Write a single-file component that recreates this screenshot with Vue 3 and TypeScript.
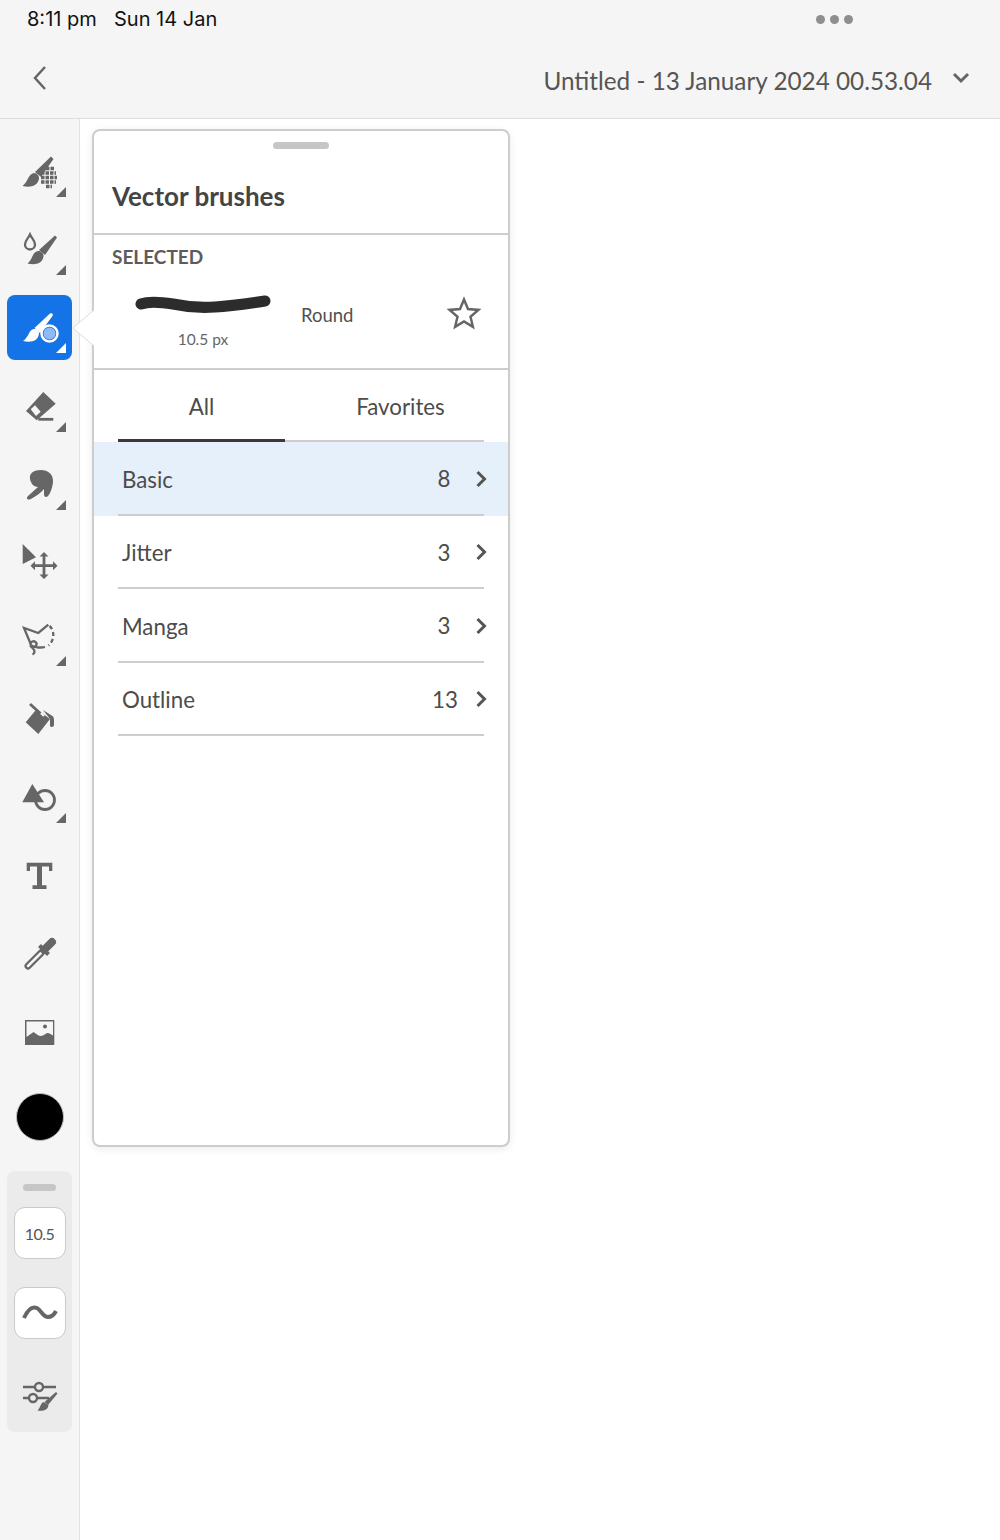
<script setup lang="ts">
interface BrushGroup {
  name: string
  count: number
  active?: boolean
}

const groups: BrushGroup[] = [
  { name: 'Basic', count: 8, active: true },
  { name: 'Jitter', count: 3 },
  { name: 'Manga', count: 3 },
  { name: 'Outline', count: 13 }
]
</script>

<template>
  <div class="app">
    <header class="top">
      <div class="status">
        <span class="clock">8:11 pm</span>
        <span class="date">Sun 14 Jan</span>
        <span class="dots"><i></i><i></i><i></i></span>
      </div>
      <div class="nav">
        <svg class="back" width="16" height="26" viewBox="0 0 16 26"><path d="M13 2 3 13l10 11" /></svg>
        <span class="doc-title">Untitled - 13 January 2024 00.53.04</span>
        <svg class="doc-chev" width="18" height="14" viewBox="0 0 18 14"><path d="M2 3l7 7 7-7" /></svg>
      </div>
    </header>

    <div class="body">
      <aside class="rail">
        <!-- pixel brush -->
        <div class="tool">
          <svg viewBox="0 0 60 60">
            <path d="M41 14.5l2.5 2.5L31 35l-6-5z" />
            <path d="M24 31c-6 1-6 9-11.5 13 7 1.5 14.5 1 16.5-7 .5-3-2-6-5-6z" />
            <g class="grid">
              <path d="M36 26.5h8" />
              <path d="M31 31h15" />
              <path d="M31 35.5h16" />
              <path d="M31 40h15" />
              <path d="M36 44.5h6" />
            </g>
            <path d="M46 55l10-10v10z" />
          </svg>
        </div>
        <!-- drop brush -->
        <div class="tool">
          <svg viewBox="0 0 60 60">
            <path class="line" d="M20 14.5c-1.5 3.5-5 6-5 10a5 5 0 0 0 10 0c0-4-3.5-6.5-5-10z" />
            <path d="M45 15.5l2 2L35 35l-6-5z" />
            <path d="M28 31c-6 1-5 8-10.5 12.5 7 1.5 14.5 1 16-7 .5-3-2.5-6-5.5-5.5z" />
            <path d="M46 55l10-10v10z" />
          </svg>
        </div>
        <!-- vector brush, selected -->
        <div class="tool on">
          <span class="tool-bg"></span>
          <svg viewBox="0 0 60 60">
            <path d="M40 15.5c2-1 3.5.5 2.5 2.5L30 35l-5.5-5z" />
            <path d="M23.5 31c-5 1-4.500 8-10.500 12 7 1.500 15 1 16-7.500 .5-2.500-2.500-5-5.500-4.500z" />
            <circle cx="39.5" cy="35.5" r="8" class="ring" />
            <circle cx="39.5" cy="35.5" r="6" class="dot" />
            <path d="M46 55l10-10v10z" />
          </svg>
        </div>
        <!-- eraser -->
        <div class="tool">
          <svg viewBox="0 0 60 60">
            <path fill-rule="evenodd" d="M33.3 15l12.4 11.7L26.7 43.3 16 34zM20.7 32.3 26 39l4.7-4.3L25 28.3z" />
            <path class="line thick" d="M28.3 42.3h15" />
            <path d="M46 55l10-10v10z" />
          </svg>
        </div>
        <!-- smudge -->
        <div class="tool">
          <svg viewBox="0 0 60 60">
            <path d="M20 24c-1-6 4-9 11-9 7 0 12 4 12 11 0 6-3 13-5 15-2 2-4 1-4-2v-5c-3 4-8 7-14 10.5-3 .5-4-1.5-2-3.5l10-9c-4 0-7-3-8-8z" />
            <path d="M46 55l10-10v10z" />
          </svg>
        </div>
        <!-- select / move -->
        <div class="tool">
          <svg viewBox="0 0 60 60">
            <path d="M12.7 11l13.3 13.3L12.7 31z" />
            <path class="line thick" d="M34 22v21M23 32.7h22" />
            <path d="M34 19l4.5 4.5h-9zM34 46l4.5-4.5h-9zM20.5 32.7l4.5-4.5v9zM47.5 32.7l-4.5-4.5v9z" />
          </svg>
        </div>
        <!-- lasso -->
        <div class="tool">
          <svg viewBox="0 0 60 60">
            <path class="line" d="M38.3 13.7 28.3 22 14 17l6.7 16" />
            <path class="line" stroke-dasharray="4 3" d="M39.5 15c5 4 5.5 14-1 19.5" />
            <path class="line" d="M35 36c-4 1-12 .5-14-2-2-3 3-5 5-2.5s-1.5 5-4 4c-2-1-2-1 1 2 2 2 2 5-.5 6" />
            <path d="M46 55l10-10v10z" />
          </svg>
        </div>
        <!-- fill -->
        <div class="tool">
          <svg viewBox="0 0 60 60">
            <path d="M15.7 33.3 26.7 20l13.3 10-11.7 15z" />
            <path class="hole-line" d="M27 20.5l7 6.5" />
            <path class="line thick" d="M20 15l10.5 9.5" />
            <path d="M33 21l9.5 6c1.5 1 1.5 3 1.5 5v4a2.2 2.2 0 0 1-4 1v-7z" />
          </svg>
        </div>
        <!-- shapes -->
        <div class="tool">
          <svg viewBox="0 0 60 60">
            <path d="M22.3 16 34 34.3H12.3z" />
            <circle class="line thick" cx="35" cy="32" r="9.5" />
            <path d="M46 55l10-10v10z" />
          </svg>
        </div>
        <!-- text -->
        <div class="tool">
          <svg viewBox="0 0 60 60">
            <path d="M16.7 16.7h25.6v8.3h-3.3v-4.5H32v18.8h4.5V43h-14v-3.7H27V20.500h-7V25h-3.300z" />
          </svg>
        </div>
        <!-- eyedropper -->
        <div class="tool">
          <svg viewBox="0 0 60 60">
            <path class="tube" d="M18 42l13-13" />
            <path class="tube-in" d="M18 42l13-13" />
            <path class="bulb" d="M34 26l8-8" />
            <path class="collar" d="M29.5 21.5l9 9" />
          </svg>
        </div>
        <!-- image -->
        <div class="tool">
          <svg viewBox="0 0 60 60">
            <path fill-rule="evenodd" d="M15 18h29.3v25H15zM16.5 19.5V35l7-5c3 2 5 4 7.5 4 3 0 5-3.5 7-3 2 .3 3 1.5 5 2.500V19.500z" />
            <circle cx="35" cy="24.5" r="2" />
          </svg>
        </div>

        <div class="colour-wrap"><span class="colour"></span></div>

        <div class="group">
          <span class="grip"></span>
          <div class="box size">10.5</div>
          <div class="box">
            <svg width="36" height="20" viewBox="0 0 36 20"><path d="M2 15C6 6 10 3 15 5c4 2 6 9 11 9 3 0 6-2 8-6" /></svg>
          </div>
          <svg class="sliders" width="36" height="32" viewBox="0 0 36 32">
            <path class="s" d="M1 7h12M21 7h13M1 18h6M15 18h12" />
            <circle class="s" cx="17" cy="7" r="4" />
            <circle class="s" cx="11" cy="18" r="4" />
            <path class="f" d="M34 12l1.500 1.500L26 25l-3.500-3z" />
            <path class="f" d="M21.500 22c-3 1-2.500 5-6 8.500 5 1 10.500 0 11-5.500z" />
          </svg>
        </div>
      </aside>

      <main class="canvas">
        <section class="panel">
          <svg class="caret" width="24" height="40" viewBox="0 0 24 40">
            <path class="caret-fill" d="M24 0 1 20l23 20z" />
            <path class="caret-edge" d="M22 2 1 20l21 18" />
          </svg>
          <div class="panel-head">
            <span class="grip wide"></span>
            <h2>Vector brushes</h2>
          </div>
          <div class="selected">
            <div class="sel-label">SELECTED</div>
            <div class="sel-row">
              <div class="stroke">
                <svg width="144" height="26" viewBox="0 0 144 26">
                  <path d="M10 13c8-3 20-2 32 0 14 3 28 4 42 3 16-1 30-3 50-6" />
                </svg>
                <span>10.5 px</span>
              </div>
              <span class="sel-name">Round</span>
              <svg class="star" width="34" height="34" viewBox="0 0 34 34">
                <path d="M17 3.5l4 9.6 10.4.8-7.900 6.800 2.400 10.100L17 25.400l-8.900 5.400 2.400-10.100-7.900-6.800 10.400-.8z" />
              </svg>
            </div>
          </div>
          <div class="tabs">
            <div class="tab current">All</div>
            <div class="tab">Favorites</div>
          </div>
          <ul class="list">
            <li v-for="g in groups" :key="g.name" :class="{ active: g.active }">
              <div class="row">
                <span class="name">{{ g.name }}</span>
                <span class="count">{{ g.count }}</span>
                <svg width="12" height="18" viewBox="0 0 12 18"><path d="M2.5 2l7 7-7 7" /></svg>
              </div>
            </li>
          </ul>
        </section>
      </main>
    </div>
  </div>
</template>

<style>
body {
  background: #fff;
}
</style>

<style scoped>
.app {
  width: 1000px;
  height: 1540px;
  display: flex;
  flex-direction: column;
  overflow: hidden;
  font-family: Lato, "Open Sans", sans-serif;
  color: #505050;
}

.top {
  height: 119px;
  box-sizing: border-box;
  background: #f5f5f5;
  border-bottom: 1px solid #dedede;
}
.status {
  height: 38px;
  display: flex;
  align-items: center;
  padding-left: 27px;
  font-family: Inter, sans-serif;
  font-size: 20px;
  color: #111;
}
.clock {
  width: 87px;
}
.dots {
  margin-left: auto;
  margin-right: 147px;
  display: flex;
  gap: 5px;
}
.dots i {
  width: 9px;
  height: 9px;
  border-radius: 50%;
  background: #8e8e8e;
}
.nav {
  height: 80px;
  display: flex;
  align-items: center;
  padding: 0 30px 0 32px;
}
.back path,
.doc-chev path {
  fill: none;
  stroke: #666;
  stroke-width: 2.5;
}
.doc-chev path {
  stroke-width: 3;
}
.doc-title {
  margin-left: auto;
  padding-top: 4px;
  font-size: 24.3px;
  color: #555;
}
.doc-chev {
  margin-left: 20px;
}

.body {
  flex: 1;
  display: flex;
  min-height: 0;
}
.rail {
  width: 80px;
  box-sizing: border-box;
  background: #f5f5f5;
  border-right: 1px solid #e2e2e2;
  padding-top: 14px;
  display: flex;
  flex-direction: column;
  align-items: center;
}
.tool {
  position: relative;
  width: 60px;
  height: 78.2px;
  flex: none;
  display: flex;
  align-items: center;
}
.tool svg {
  position: relative;
  width: 60px;
  height: 60px;
  fill: #666;
}
.tool .line {
  fill: none;
  stroke: #666;
  stroke-width: 2.3;
}
.tool .line.thick {
  stroke-width: 2.8;
}
.tool .grid path {
  fill: none;
  stroke: #666;
  stroke-width: 3.5;
  stroke-dasharray: 3.5 1;
}
.tool .hole-line {
  fill: none;
  stroke: #f5f5f5;
  stroke-width: 2.2;
}
.tool .tube {
  fill: none;
  stroke: #666;
  stroke-width: 7;
  stroke-linecap: round;
}
.tool .tube-in {
  fill: none;
  stroke: #f5f5f5;
  stroke-width: 2.5;
  stroke-linecap: round;
}
.tool .bulb {
  fill: none;
  stroke: #666;
  stroke-width: 8;
  stroke-linecap: round;
}
.tool .collar {
  fill: none;
  stroke: #666;
  stroke-width: 4;
}
.tool.on svg {
  fill: #fff;
}
.tool-bg {
  position: absolute;
  left: -3px;
  top: 5.5px;
  width: 65px;
  height: 65px;
  border-radius: 8px;
  background: #1473e6;
}
.tool .ring {
  fill: none;
  stroke: #fff;
  stroke-width: 2.5;
}
.tool .dot {
  fill: #8fb9f4;
}

.colour-wrap {
  height: 48px;
  margin-top: 22px;
  flex: none;
}
.colour {
  display: block;
  width: 48px;
  height: 48px;
  box-sizing: border-box;
  border-radius: 50%;
  background: #000;
  border: 1.5px solid #bbb;
}
.group {
  width: 65px;
  height: 261px;
  margin-top: 30px;
  flex: none;
  box-sizing: border-box;
  padding-top: 13px;
  border-radius: 8px;
  background: #ebebeb;
  display: flex;
  flex-direction: column;
  align-items: center;
}
.grip {
  display: block;
  width: 33px;
  height: 7px;
  border-radius: 4px;
  background: #c6c6c6;
}
.box {
  width: 52px;
  height: 52px;
  box-sizing: border-box;
  margin-top: 28px;
  border: 1.5px solid #cacaca;
  border-radius: 11px;
  background: #fff;
  display: flex;
  align-items: center;
  justify-content: center;
}
.box.size {
  margin-top: 16px;
  font-size: 16px;
  letter-spacing: -0.5px;
  color: #555;
}
.box path {
  fill: none;
  stroke: #666;
  stroke-width: 4;
}
.sliders {
  margin-top: 41px;
}
.sliders .s {
  fill: none;
  stroke: #666;
  stroke-width: 2.4;
}
.sliders .f {
  fill: #666;
}

.canvas {
  flex: 1;
  background: #fff;
  padding: 10px 0 0 12px;
}
.panel {
  position: relative;
  width: 418px;
  height: 1018px;
  box-sizing: border-box;
  background: #fff;
  border: 2px solid #cdcdcd;
  border-radius: 8px;
  box-shadow: 0 2px 8px rgba(0, 0, 0, 0.08);
  display: flex;
  flex-direction: column;
}
.caret {
  position: absolute;
  left: -22px;
  top: 177px;
}
.caret-fill {
  fill: #fff;
}
.caret-edge {
  fill: none;
  stroke: #dcdcdc;
  stroke-width: 1;
}
.panel-head {
  height: 104px;
  flex: none;
  box-sizing: border-box;
  border-bottom: 2px solid #cdcdcd;
  position: relative;
}
.grip.wide {
  width: 56px;
  position: absolute;
  left: 179px;
  top: 10.5px;
}
.panel-head h2 {
  position: absolute;
  left: 18px;
  top: 47px;
  margin: 0;
  font-size: 26px;
  font-weight: 700;
  line-height: 36px;
  color: #444;
}
.selected {
  height: 135px;
  flex: none;
  box-sizing: border-box;
  border-bottom: 2px solid #cdcdcd;
  padding: 11px 18px 0;
}
.sel-label {
  font-size: 19px;
  font-weight: 700;
  line-height: 22px;
  color: #5c5c5c;
}
.sel-row {
  display: flex;
  align-items: flex-start;
  margin-top: 16px;
}
.stroke {
  width: 156px;
  margin-left: 13px;
  display: flex;
  flex-direction: column;
  align-items: center;
  font-size: 15.5px;
  color: #666;
}
.stroke svg {
  display: block;
  margin-top: 7px;
}
.stroke span {
  margin-top: 11px;
  line-height: 22px;
}
.stroke path {
  fill: none;
  stroke: #2c2c2c;
  stroke-width: 11;
  stroke-linecap: round;
}
.sel-name {
  margin: 19px 0 0 20px;
  font-size: 18.5px;
  line-height: 24px;
  color: #505050;
}
.star {
  margin: 12px 9px 0 auto;
}
.star path {
  fill: none;
  stroke: #666;
  stroke-width: 2.5;
}
.tabs {
  height: 72px;
  flex: none;
  margin: 0 24px;
  box-sizing: border-box;
  border-bottom: 2px solid #cdcdcd;
  display: flex;
}
.tab {
  font-size: 22.3px;
  line-height: 74px;
  color: #4c4c4c;
  text-align: center;
  height: 70px;
}
.tab:first-child {
  width: 167px;
}
.tab:last-child {
  flex: 1;
  padding-left: 32px;
}
.tab.current {
  height: 69px;
  border-bottom: 3px solid #3a3a3a;
}
.list {
  list-style: none;
  margin: 0;
  padding: 0;
}
.list li.active {
  background: #e6f0fa;
}
.row {
  height: 73.5px;
  margin: 0 24px;
  box-sizing: border-box;
  border-bottom: 2px solid #cdcdcd;
  display: flex;
  align-items: center;
  padding: 2px 0 0 4px;
  font-size: 22.3px;
  color: #4c4c4c;
}
.name {
  flex: 1;
  padding-top: 1px;
}
.count {
  width: 24px;
  margin-right: 19px;
  text-align: center;
}
.row svg {
  margin-right: -3px;
}
.row path {
  fill: none;
  stroke: #555;
  stroke-width: 3;
}
</style>
